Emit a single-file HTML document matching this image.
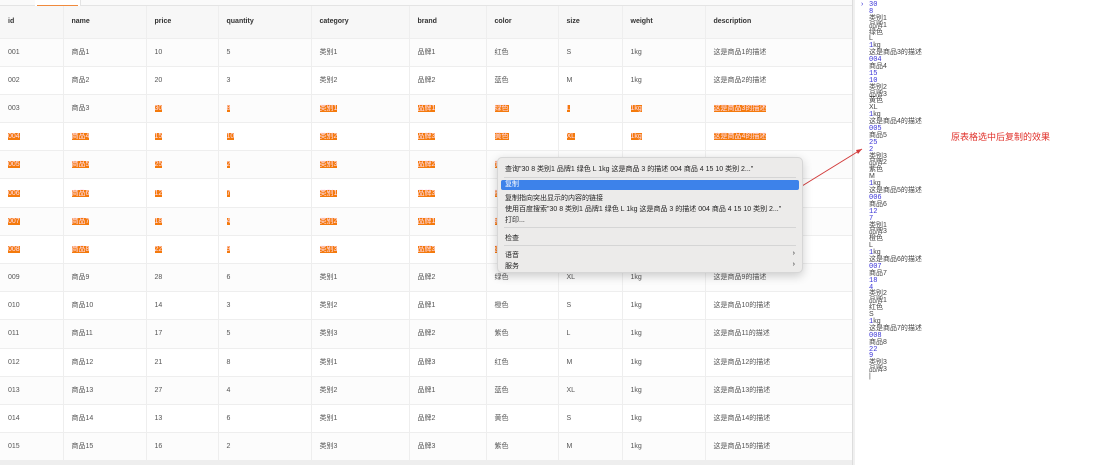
<!DOCTYPE html>
<html><head><meta charset="utf-8"><style>
*{margin:0;padding:0;box-sizing:border-box}
body{width:1098px;height:465px;overflow:hidden;background:#fff;font-family:"Liberation Sans","Noto Sans CJK SC",sans-serif;position:relative}
#tbl{position:absolute;left:0;top:6px;width:852px;border-collapse:collapse;table-layout:fixed;font-size:7px;color:#555}
#tbl td,#tbl th{border-right:1px solid #eee;border-bottom:1px solid #eee;padding:0 0 0 8px;text-align:left;white-space:nowrap;overflow:hidden;line-height:9px}
#tbl th{height:32px;background:#f7f7f7;color:#333;font-weight:bold}
#tbl td{height:28.2px}
#tbl tr:nth-child(even) td{background:#fcfcfc}
s{text-decoration:none;background:#f47a0c;color:#fde;}
.con{position:absolute;left:869px;top:1px;font-size:7px;color:#444}
.con div{height:6.9px;line-height:7px;white-space:nowrap;overflow:visible}
.con b{color:#3a34d6;font-weight:normal;font-family:"Liberation Mono",monospace}
.menu{position:absolute;left:497px;top:157px;width:306px;height:116px;background:#ecebea;border:1px solid #d6d6d6;border-radius:5px;box-shadow:0 3px 10px rgba(0,0,0,.2);font-size:7px;color:#222}
.menu div{position:absolute;left:7px;white-space:nowrap}
.menu hr{position:absolute;left:6px;right:6px;border:0;border-top:1px solid #d5d5d5}
</style></head><body>
<div style="position:absolute;left:0;top:0;width:852px;height:6px;background:#fafafa;border-bottom:1px solid #e4e4e4"></div>
<div style="position:absolute;left:35px;top:0;width:46px;height:6px;background:#fff;border-right:1px solid #e4e4e4"></div>
<div style="position:absolute;left:37px;top:5px;width:41px;height:1px;background:#f08a3c"></div>
<table id="tbl">
<colgroup><col style="width:63px"><col style="width:83px"><col style="width:72px"><col style="width:93px"><col style="width:98px"><col style="width:77px"><col style="width:72px"><col style="width:64px"><col style="width:83px"><col style="width:147px"></colgroup>
<tr><th>id</th><th>name</th><th>price</th><th>quantity</th><th>category</th><th>brand</th><th>color</th><th>size</th><th>weight</th><th>description</th></tr>
<tr><td>001</td><td>商品1</td><td>10</td><td>5</td><td>类别1</td><td>品牌1</td><td>红色</td><td>S</td><td>1kg</td><td>这是商品1的描述</td></tr>
<tr><td>002</td><td>商品2</td><td>20</td><td>3</td><td>类别2</td><td>品牌2</td><td>蓝色</td><td>M</td><td>1kg</td><td>这是商品2的描述</td></tr>
<tr><td>003</td><td>商品3</td><td><s>30</s></td><td><s>8</s></td><td><s>类别1</s></td><td><s>品牌1</s></td><td><s>绿色</s></td><td><s>L</s></td><td><s>1kg</s></td><td><s>这是商品3的描述</s></td></tr>
<tr><td><s>004</s></td><td><s>商品4</s></td><td><s>15</s></td><td><s>10</s></td><td><s>类别2</s></td><td><s>品牌3</s></td><td><s>黄色</s></td><td><s>XL</s></td><td><s>1kg</s></td><td><s>这是商品4的描述</s></td></tr>
<tr><td><s>005</s></td><td><s>商品5</s></td><td><s>25</s></td><td><s>2</s></td><td><s>类别3</s></td><td><s>品牌2</s></td><td><s>紫色</s></td><td><s>M</s></td><td><s>1kg</s></td><td><s>这是商品5的描述</s></td></tr>
<tr><td><s>006</s></td><td><s>商品6</s></td><td><s>12</s></td><td><s>7</s></td><td><s>类别1</s></td><td><s>品牌3</s></td><td><s>橙色</s></td><td><s>L</s></td><td><s>1kg</s></td><td><s>这是商品6的描述</s></td></tr>
<tr><td><s>007</s></td><td><s>商品7</s></td><td><s>18</s></td><td><s>4</s></td><td><s>类别2</s></td><td><s>品牌1</s></td><td><s>红色</s></td><td><s>S</s></td><td><s>1kg</s></td><td><s>这是商品7的描述</s></td></tr>
<tr><td><s>008</s></td><td><s>商品8</s></td><td><s>22</s></td><td><s>9</s></td><td><s>类别3</s></td><td><s>品牌3</s></td><td><s>蓝色</s></td><td></td><td></td><td></td></tr>
<tr><td>009</td><td>商品9</td><td>28</td><td>6</td><td>类别1</td><td>品牌2</td><td>绿色</td><td>XL</td><td>1kg</td><td>这是商品9的描述</td></tr>
<tr><td>010</td><td>商品10</td><td>14</td><td>3</td><td>类别2</td><td>品牌1</td><td>橙色</td><td>S</td><td>1kg</td><td>这是商品10的描述</td></tr>
<tr><td>011</td><td>商品11</td><td>17</td><td>5</td><td>类别3</td><td>品牌2</td><td>紫色</td><td>L</td><td>1kg</td><td>这是商品11的描述</td></tr>
<tr><td>012</td><td>商品12</td><td>21</td><td>8</td><td>类别1</td><td>品牌3</td><td>红色</td><td>M</td><td>1kg</td><td>这是商品12的描述</td></tr>
<tr><td>013</td><td>商品13</td><td>27</td><td>4</td><td>类别2</td><td>品牌1</td><td>蓝色</td><td>XL</td><td>1kg</td><td>这是商品13的描述</td></tr>
<tr><td>014</td><td>商品14</td><td>13</td><td>6</td><td>类别1</td><td>品牌2</td><td>黄色</td><td>S</td><td>1kg</td><td>这是商品14的描述</td></tr>
<tr><td>015</td><td>商品15</td><td>16</td><td>2</td><td>类别3</td><td>品牌3</td><td>紫色</td><td>M</td><td>1kg</td><td>这是商品15的描述</td></tr>
</table>
<div style="position:absolute;left:0;top:461px;width:852px;height:4px;background:#eee"></div>
<div style="position:absolute;left:852px;top:0;width:3px;height:465px;background:#f0f0f0;border-left:1px solid #ddd"></div>
<div style="position:absolute;left:861px;top:1px;font-size:7px;color:#3a34d6">›</div>
<div class="con">
<div><b>30</b></div><div><b>8</b></div><div>类别1</div><div>品牌1</div><div>绿色</div><div>L</div><div><b>1</b>kg</div><div>这是商品3的描述</div>
<div><b>004</b></div><div>商品4</div><div><b>15</b></div><div><b>10</b></div><div>类别2</div><div>品牌3</div><div>黄色</div><div>XL</div><div><b>1</b>kg</div><div>这是商品4的描述</div>
<div><b>005</b></div><div>商品5</div><div><b>25</b></div><div><b>2</b></div><div>类别3</div><div>品牌2</div><div>紫色</div><div>M</div><div><b>1</b>kg</div><div>这是商品5的描述</div>
<div><b>006</b></div><div>商品6</div><div><b>12</b></div><div><b>7</b></div><div>类别1</div><div>品牌3</div><div>橙色</div><div>L</div><div><b>1</b>kg</div><div>这是商品6的描述</div>
<div><b>007</b></div><div>商品7</div><div><b>18</b></div><div><b>4</b></div><div>类别2</div><div>品牌1</div><div>红色</div><div>S</div><div><b>1</b>kg</div><div>这是商品7的描述</div>
<div><b>008</b></div><div>商品8</div><div><b>22</b></div><div><b>9</b></div><div>类别3</div><div>品牌3</div><div>|</div>
</div>
<div style="position:absolute;left:951px;top:130px;font-size:9px;color:#e0302a">原表格选中后复制的效果</div>
<svg style="position:absolute;left:0;top:0" width="1098" height="465"><line x1="802" y1="186" x2="862" y2="149" stroke="#d23a3a" stroke-width="1"/><path d="M862 149 l-6 1 l2 4z" fill="#d23a3a"/></svg>
<div class="menu">
<div style="top:6px">查询"30 8 类别1 品牌1 绿色 L 1kg 这是商品 3 的描述 004 商品 4 15 10 类别 2..."</div>
<hr style="top:19px">
<div style="top:22px;left:3px;right:3px;height:10px;background:#3d82ea;border-radius:2px;color:#fff;padding-left:4px;line-height:10px">复制</div>
<div style="top:35px">复制指向突出显示的内容的链接</div>
<div style="top:46px">使用百度搜索"30 8 类别1 品牌1 绿色 L 1kg 这是商品 3 的描述 004 商品 4 15 10 类别 2..."</div>
<div style="top:57px">打印...</div>
<hr style="top:69px">
<div style="top:75px">检查</div>
<hr style="top:87px">
<div style="top:92px">语音</div>
<div style="top:103px">服务</div>
<div style="top:92px;left:auto;right:7px">›</div>
<div style="top:103px;left:auto;right:7px">›</div>
</div>
</body></html>
